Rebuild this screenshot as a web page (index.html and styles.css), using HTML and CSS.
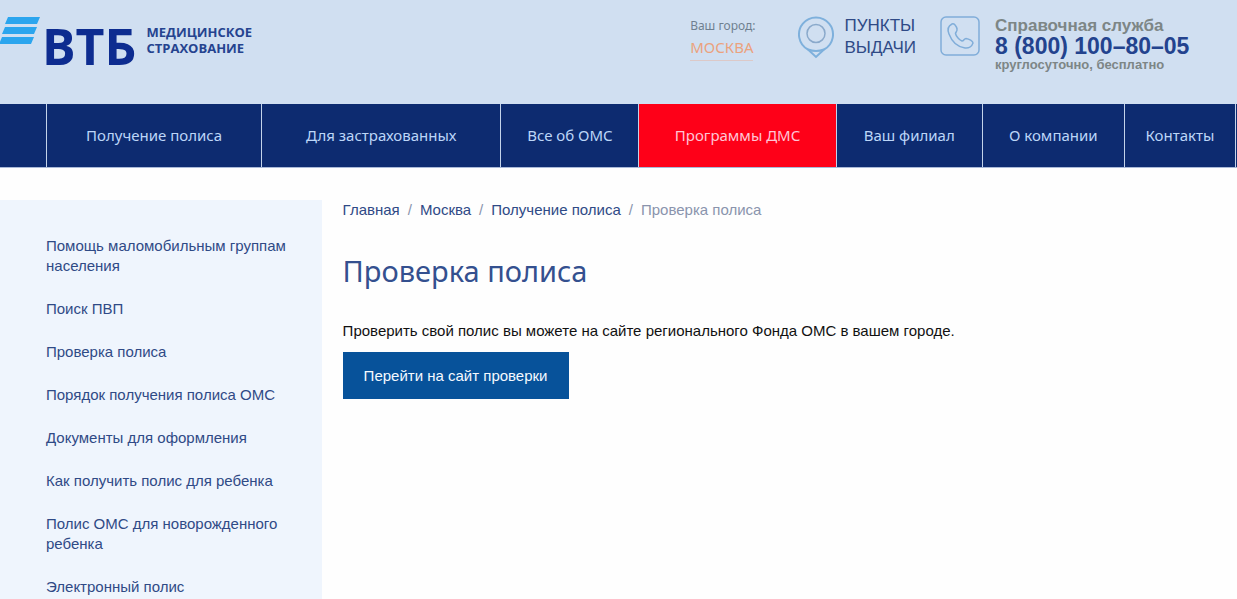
FILE: index.html
```html
<!DOCTYPE html>
<html lang="ru">
<head>
<meta charset="utf-8">
<meta name="viewport" content="width=device-width, initial-scale=1">
<title>Проверка полиса</title>
<link rel="stylesheet" href="styles.css">
</head>
<body>
<header class="header">
  <a class="logo" href="#">
    <svg class="logo-mark" viewBox="0 0 40 27" aria-hidden="true">
      <path d="M8 0H40L37 7H5ZM5 10H37L34 17H2ZM2 20H34L31 27H-1Z"/>
    </svg>
    <span class="logo-name">ВТБ</span>
    <span class="logo-sub">МЕДИЦИНСКОЕ<br>СТРАХОВАНИЕ</span>
  </a>
  <div class="city">
    <span class="city-label">Ваш город:</span>
    <a class="city-link" href="#">МОСКВА</a>
  </div>
  <a class="points" href="#">
    <svg class="pin" viewBox="0 0 38 46" aria-hidden="true">
      <path class="pin-body" d="M11 34.500A17 17 0 1 1 27 34.500L19 42Z"/>
      <path class="pin-body" d="M11 34.500Q19 37.500 27 34.500"/>
      <circle class="pin-ring" cx="19" cy="18.500" r="9"/>
    </svg>
    <span>ПУНКТЫ<br>ВЫДАЧИ</span>
  </a>
  <div class="support">
    <svg class="phone" viewBox="0 0 40 40" aria-hidden="true">
      <rect x="1" y="1" width="38" height="38" rx="5"/>
      <path d="M12 8C8 10 7 13 9 18C12 26 18 31 25 32C29 32.500 32 30 33 27C33 25 29 23 26 22.500C24 22.500 24 25 22 25C19 24 16 20 15.500 17.500C15.500 16 17.500 15.500 17 13C16.500 10 14 7 12 8Z"/>
    </svg>
    <div class="support-text">
      <span class="support-title">Справочная служба</span>
      <a class="support-number" href="tel:88001008005">8 (800) 100–80–05</a>
      <span class="support-note">круглосуточно, бесплатно</span>
    </div>
  </div>
</header>
<nav class="nav" aria-label="Основное меню">
  <a href="#">Получение полиса</a>
  <a href="#">Для застрахованных</a>
  <a href="#">Все об ОМС</a>
  <a class="nav-accent" href="#">Программы ДМС</a>
  <a href="#">Ваш филиал</a>
  <a href="#">О компании</a>
  <a href="#">Контакты</a>
</nav>
<div class="layout">
  <aside class="sidebar">
    <a href="#">Помощь маломобильным группам населения</a>
    <a href="#">Поиск ПВП</a>
    <a href="#">Проверка полиса</a>
    <a href="#">Порядок получения полиса ОМС</a>
    <a href="#">Документы для оформления</a>
    <a href="#">Как получить полис для ребенка</a>
    <a href="#">Полис ОМС для новорожденного ребенка</a>
    <a href="#">Электронный полис</a>
  </aside>
  <main class="content">
    <nav class="crumbs" aria-label="Навигационная цепочка">
      <a href="#">Главная</a><span>/</span><a href="#">Москва</a><span>/</span><a href="#">Получение полиса</a><span>/</span><span class="crumb-current">Проверка полиса</span>
    </nav>
    <h1 class="title">Проверка полиса</h1>
    <p class="lead">Проверить свой полис вы можете на сайте регионального Фонда ОМС в вашем городе.</p>
    <button class="button" type="button">Перейти на сайт проверки</button>
  </main>
</div>
</body>
</html>
```
FILE: styles.css
```css
* {
  box-sizing: border-box;
}

body {
  display: flex;
  flex-direction: column;
  min-height: 100vh;
  margin: 0;
  background: #fefefe;
  color: #111;
  font: 15px/20px "Liberation Sans", Arial, sans-serif;
}

a {
  color: #2f4a86;
  text-decoration: none;
}

svg {
  flex: none;
  fill: none;
}

.header {
  display: flex;
  align-items: flex-start;
  height: 104px;
  padding: 15px 44px 0 0;
  background: #d0dff1;
}

.logo {
  display: flex;
  margin-right: auto;
}

.logo-mark {
  width: 40px;
  height: 27px;
  margin-top: 2px;
  fill: #2ba5ee;
}

.logo-name {
  margin-left: 2px;
  color: #0d2c90;
  font: bold 50px/62px "Open Sans", sans-serif;
}

.logo-sub {
  margin: 9px 0 0 10px;
  color: #25438f;
  font: bold 13px/16px "Open Sans", sans-serif;
}

.city {
  display: flex;
  flex-direction: column;
  align-items: flex-start;
  margin-right: 41px;
  font-family: "Noto Sans", sans-serif;
}

.city-label {
  color: #6f7f90;
  font-size: 12px;
  line-height: 21px;
}

.city-link {
  padding-bottom: 2px;
  border-bottom: 1px solid #dcc9c8;
  color: #eba27e;
  font-size: 15px;
  line-height: 22px;
}

.points {
  display: flex;
  gap: 10px;
  margin-right: 24px;
  font-size: 17px;
  line-height: 22px;
}

.pin {
  width: 38px;
  height: 46px;
}

.pin-body {
  stroke: #7eb0dc;
  stroke-width: 2;
}

.pin-ring {
  stroke: #8aa9cb;
  stroke-width: 1.500;
}

.support {
  display: flex;
  gap: 15px;
}

.phone {
  width: 40px;
  height: 40px;
  margin-top: 1px;
  stroke: #80add9;
  stroke-width: 1.500;
}

.support-text {
  display: flex;
  flex-direction: column;
  min-width: 198px;
  color: #7d8686;
  font-weight: bold;
  line-height: 21px;
}

.support-title {
  font-size: 17px;
}

.support-number {
  color: #23438e;
  font-size: 23px;
}

.support-note {
  font-size: 13px;
  line-height: 16px;
}

.nav {
  display: grid;
  grid-template-columns: 215fr 239fr 138fr 197fr 146fr 142fr 112fr;
  padding: 0 1px 0 46px;
  border-bottom: 1px solid #a9b9d8;
  background: #0d2b70;
}

.nav a {
  padding: 21px 0;
  border-left: 1px solid #c3d3ea;
  color: #bcd6f8;
  font: 15px/21px "Noto Sans", sans-serif;
  text-align: center;
}

.nav a:last-child {
  border-right: 1px solid #c3d3ea;
}

.nav .nav-accent {
  background: #fe0018;
  color: #ffc5d5;
}

.layout {
  display: grid;
  flex: 1;
  grid-template-columns: 26% 1fr;
  gap: 21px;
  padding-top: 32px;
}

.sidebar {
  display: flex;
  flex-direction: column;
  gap: 23px;
  padding: 36px 32px 2px 46px;
  background: #eff5fd;
}

.crumbs {
  display: flex;
  gap: 8px;
  color: #8a94ad;
}

.title {
  margin: 30px 0 29px;
  color: #34508f;
  font: 29px/42px "Noto Sans", sans-serif;
}

.lead {
  margin: 0 0 11px;
}

.button {
  padding: 13px 21px;
  border: 0;
  background: #07529a;
  color: #f4f9ff;
  font: inherit;
  line-height: 21px;
}
```
